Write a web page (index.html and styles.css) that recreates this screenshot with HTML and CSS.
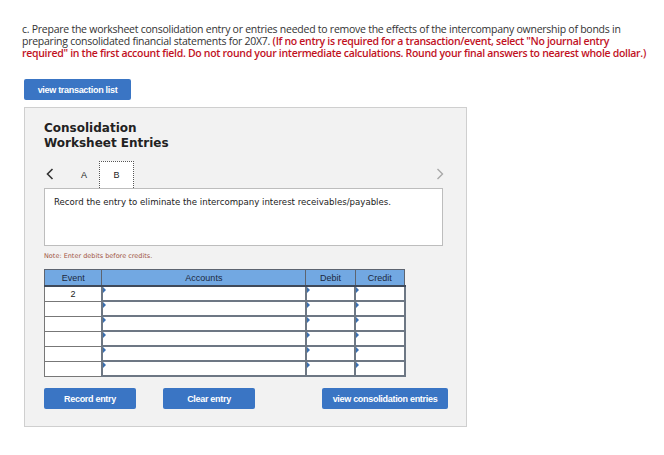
FILE: index.html
```html
<!DOCTYPE html>
<html>
<head>
<meta charset="utf-8">
<link rel="stylesheet" href="styles.css">
</head>
<body>
<div class="prompt">c. Prepare the worksheet consolidation entry or entries needed to remove the effects of the intercompany ownership of bonds in preparing consolidated financial statements for 20X7. <span class="red">(If no entry is required for a transaction/event, select "No journal entry required" in the first account field. Do not round your intermediate calculations. Round your final answers to nearest whole dollar.)</span></div>

<button class="btn btn-top">view transaction list</button>

<div class="panel">
  <h2 class="title">Consolidation<br>Worksheet Entries</h2>
  <div class="tabs">
    <span class="arrow left"><svg width="8" height="12" viewBox="0 0 8 12"><path d="M6.5 1 L1.5 6 L6.5 11" fill="none" stroke="#333" stroke-width="1.6"/></svg></span>
    <span class="tab">A</span>
    <span class="tab active">B</span>
    <span class="spacer"></span>
    <span class="arrow right"><svg width="8" height="12" viewBox="0 0 8 12"><path d="M1.5 1 L6.5 6 L1.5 11" fill="none" stroke="#a8a8a8" stroke-width="1.4"/></svg></span>
  </div>
  <div class="desc">Record the entry to eliminate the intercompany interest receivables/payables.</div>
  <div class="note">Note: Enter debits before credits.</div>
  <table class="grid">
    <thead>
      <tr><th class="c-ev">Event</th><th class="c-ac">Accounts</th><th class="c-dr">Debit</th><th class="c-cr">Credit</th></tr>
    </thead>
    <tbody>
      <tr><td class="ev">2</td><td class="in"></td><td class="in"></td><td class="in"></td></tr>
      <tr><td class="ev"></td><td class="in"></td><td class="in"></td><td class="in"></td></tr>
      <tr><td class="ev"></td><td class="in"></td><td class="in"></td><td class="in"></td></tr>
      <tr><td class="ev"></td><td class="in"></td><td class="in"></td><td class="in"></td></tr>
      <tr><td class="ev"></td><td class="in"></td><td class="in"></td><td class="in"></td></tr>
      <tr><td class="ev"></td><td class="in"></td><td class="in"></td><td class="in"></td></tr>
    </tbody>
  </table>
  <div class="actions">
    <button class="btn btn-rec">Record entry</button>
    <button class="btn btn-clr">Clear entry</button>
    <button class="btn btn-view">view consolidation entries</button>
  </div>
</div>
</body>
</html>
```

FILE: styles.css
```css
html, body {
  margin: 0;
  padding: 0;
  background: #fff;
}
body {
  font-family: "Open Sans", "Liberation Sans", sans-serif;
  color: #333;
}
.prompt {
  margin: 23px 14px 0 22px;
  font-size: 10.5px;
  line-height: 12px;
  letter-spacing: -0.25px;
  color: #333;
}
.red {
  color: #c1121f;
  font-weight: 600;
  letter-spacing: -0.3px;
}
.btn {
  display: block;
  border: none;
  background: #3a75c4;
  color: #fff;
  font-family: "Liberation Sans", Arial, sans-serif;
  font-weight: bold;
  font-size: 9px;
  letter-spacing: -0.3px;
  padding: 0;
  height: 21px;
  border-radius: 2px;
  cursor: pointer;
}
.btn-top {
  margin: 20px 0 0 24px;
  width: 107px;
}
.panel {
  margin: 7px 0 0 24px;
  width: 422px;
  height: 318px;
  background: #f2f2f2;
  border: 1px solid #cfcfcf;
  padding: 0 0 0 19px;
  box-sizing: content-box;
  display: flex;
  flex-direction: column;
}
.title {
  margin: 13px 0 0 0;
  font-family: "DejaVu Sans", Verdana, sans-serif;
  font-size: 12px;
  line-height: 15px;
  font-weight: bold;
  color: #222;
}
.tabs {
  display: flex;
  align-items: flex-end;
  margin-top: 9px;
  width: 400px;
  height: 28px;
  font-family: "Liberation Sans", Arial, sans-serif;
  font-size: 9px;
  color: #222;
}
.arrow {
  align-self: center;
  display: flex;
}
.arrow.left {
  margin-left: 2px;
  width: 25px;
}
.tab {
  width: 22px;
  height: 26px;
  display: flex;
  align-items: center;
  justify-content: center;
  margin-left: 2px;
}
.tab.active {
  width: 33px;
  height: 26px;
  background: #fff;
  border: 1px dotted #555;
  border-bottom: none;
  margin-left: 4px;
}
.spacer {
  flex: 1;
}
.desc {
  width: 388px;
  height: 48px;
  background: #fff;
  border: 1px solid #bdbdbd;
  font-family: "DejaVu Sans", Verdana, sans-serif;
  font-size: 8.6px;
  color: #222;
  padding: 8px 0 0 9px;
}
.desc, .grid, .note {
  box-sizing: content-box;
}
.note {
  margin-top: 5px;
  font-family: "DejaVu Sans", Verdana, sans-serif;
  font-size: 6.5px;
  color: #a0543f;
  height: 10px;
  line-height: 10px;
}
.grid {
  margin-top: 8px;
  border-collapse: collapse;
  width: 360px;
  font-family: "Liberation Sans", Arial, sans-serif;
  font-size: 9px;
  color: #222;
}
.grid th {
  background: #72a8e2;
  font-weight: normal;
  color: #1c2840;
  height: 15px;
  padding: 0;
  border: 1.5px solid #5d6470;
  border-bottom: 2px solid #3f4a5a;
}
.c-ev { width: 56px; }
.c-ac { width: 202px; }
.c-dr { width: 48px; }
.c-cr { width: 48px; }
.grid td {
  height: 13px;
  padding: 0;
  background: #fff;
  border: 1.5px solid #6b727c;
  text-align: center;
  position: relative;
}
.grid td.ev {
  border-left-width: 1px;
  border-right-width: 1px;
  border-color: #777;
}
.grid td.in {
  border: 2px solid #6d7784;
}
.grid td.in::before {
  content: "";
  position: absolute;
  left: 0;
  top: 0;
  border-top: 3px solid transparent;
  border-bottom: 3px solid transparent;
  border-left: 3px solid #3a6fb0;
}
.actions {
  display: flex;
  margin-top: 11px;
}
.actions .btn {
  height: 21px;
}
.btn-rec { width: 92px; }
.btn-clr { width: 92px; margin-left: 27px; }
.btn-view { width: 126px; margin-left: 67px; }
```
